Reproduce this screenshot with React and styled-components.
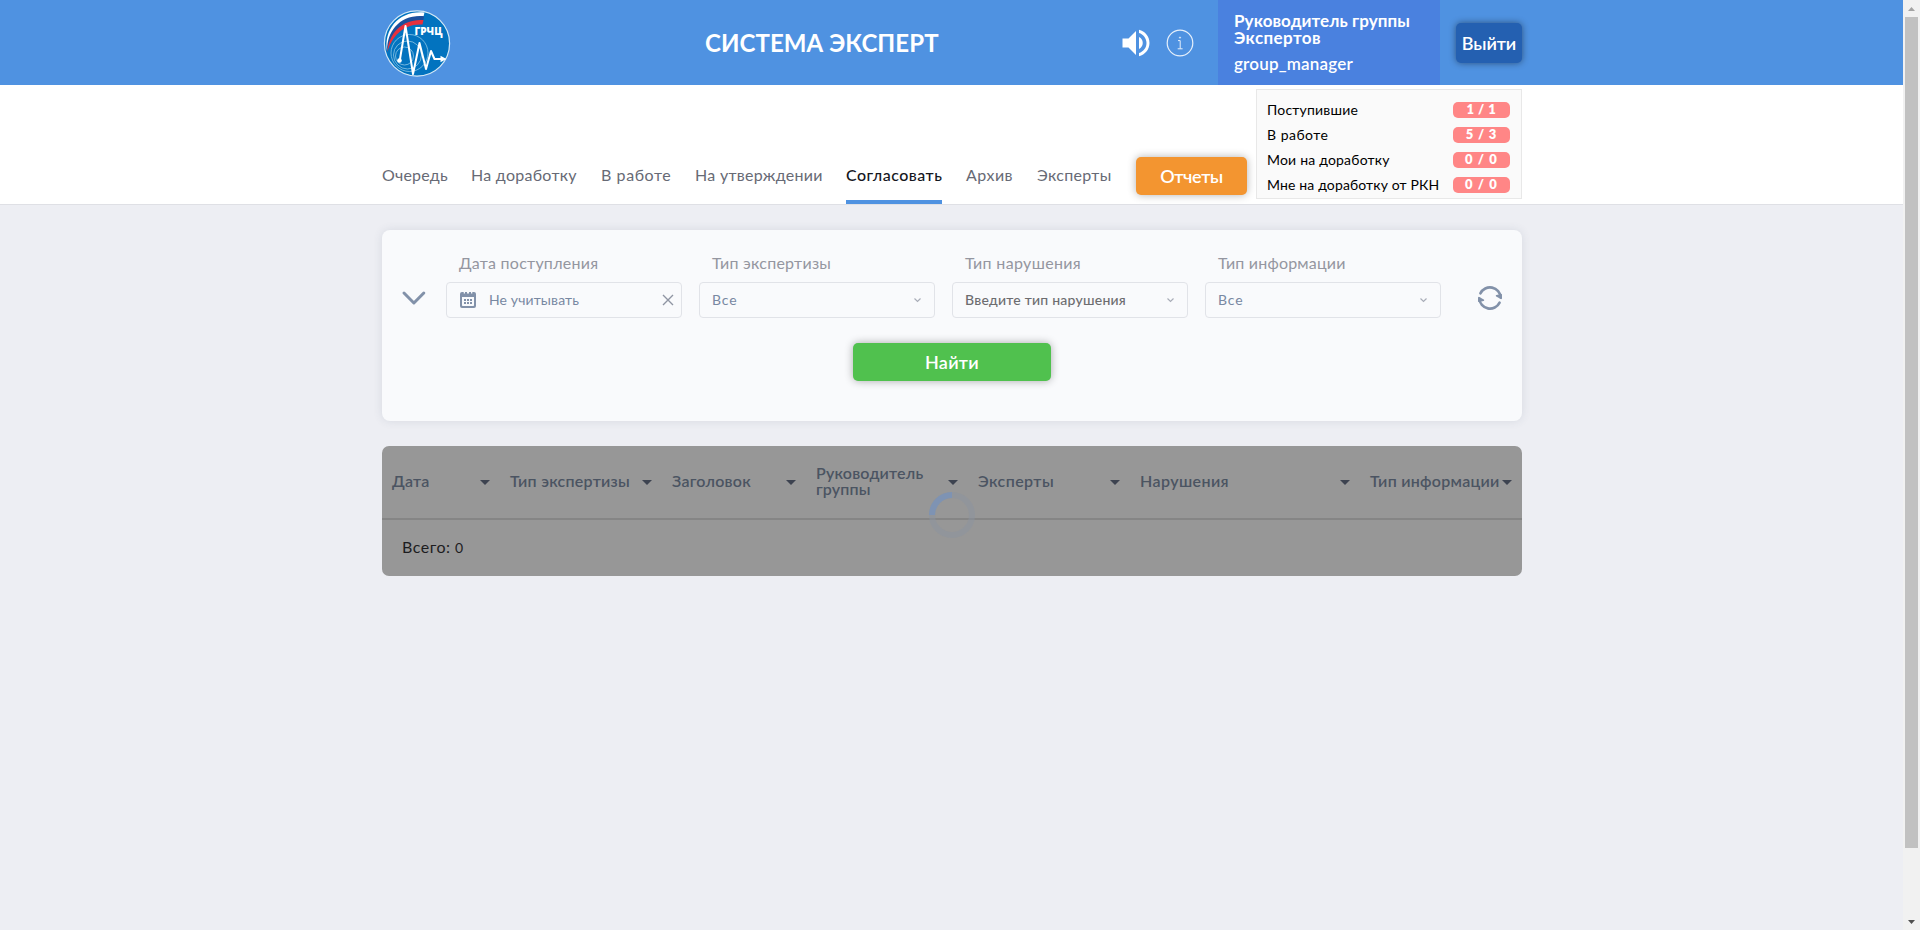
import React from 'react';
import styled, { createGlobalStyle } from 'styled-components';
import { MdVolumeUp } from 'react-icons/md';

const GlobalStyle = createGlobalStyle`
  *, *::before, *::after { box-sizing: border-box; }
  body { margin: 0; background: #edeef3; font-family: Lato, "Liberation Sans", sans-serif; overflow: hidden; }
  button { font-family: inherit; border: 0; padding: 0; }
`;

const Screen = styled.div`
  display: flex;
  height: 930px;
`;
const Page = styled.div`
  flex: 1;
  min-width: 0;
`;
const Container = styled.div`
  width: 1140px;
  margin: 0 auto 0 382px;
`;

const Label = styled.span`
  letter-spacing: ${(p) => p.$track || 0}px;
  white-space: nowrap;
`;

/* header */
const Header = styled.header`
  height: 85px;
  background: #4f92e1;
  color: #fff;
`;
const HeaderRow = styled(Container)`
  display: flex;
  align-items: center;
  height: 85px;
`;
const LogoBox = styled.div`
  width: 323px;
  height: 68px;
`;
const Title = styled.h1`
  margin: 0;
  width: 417px;
  font-size: 24px;
  line-height: 30px;
  font-weight: 700;
`;
const HeaderIcons = styled.div`
  display: flex;
  flex: none;
  align-items: center;
  gap: 12px;
  width: 98px;
  margin-left: -4px;
`;
const UserPanel = styled.div`
  display: flex;
  flex: none;
  flex-direction: column;
  justify-content: center;
  width: 222px;
  height: 85px;
  margin-left: 2px;
  padding: 0 16px;
  background: #4a81df;
  font-size: 17px;
`;
const UserRole = styled.div`
  display: flex;
  flex-direction: column;
  line-height: 17px;
  font-weight: 700;
`;
const UserLogin = styled.div`
  margin-top: 8px;
  line-height: 20px;
  font-weight: 600;
`;
const ExitButton = styled.button`
  flex: none;
  width: 66px;
  height: 40px;
  margin: 1px 0 0 16px;
  padding-bottom: 1px;
  border-radius: 5px;
  background: #2460b1;
  color: #fff;
  font-size: 18px;
  font-weight: 600;
  box-shadow: 0 0 7px rgba(0, 0, 0, 0.45);
`;

/* navigation */
const NavBar = styled.div`
  height: 120px;
  background: #fff;
  border-bottom: 1px solid #dfe0e5;
`;
const NavRow = styled(Container)`
  display: flex;
  align-items: flex-end;
  height: 119px;
`;
const Tabs = styled.nav`
  display: flex;
  width: 754px;
`;
const Tab = styled.a`
  width: ${(p) => p.$width}px;
  height: 42px;
  padding-top: 2px;
  margin-right: ${(p) => p.$gap || 24}px;
  border-bottom: 4px solid ${(p) => (p.$active ? '#4f92e1' : 'transparent')};
  color: ${(p) => (p.$active ? '#15171e' : '#676a75')};
  font-size: 16px;
  line-height: 22px;
  font-weight: ${(p) => (p.$active ? 500 : 400)};
`;
const ReportsButton = styled.button`
  width: 111px;
  height: 38px;
  margin: 0 9px 9px 0;
  border-radius: 5px;
  background: #f39530;
  color: #fff;
  font-size: 18px;
  font-weight: 600;
  box-shadow: 0 0 8px rgba(0, 0, 0, 0.3);
`;
const Stats = styled.div`
  width: 266px;
  height: 110px;
  margin-bottom: 5px;
  padding: 7px 11px 0 10px;
  border: 1px solid #e8e8e8;
  background: #fafafa;
`;
const StatRow = styled.div`
  display: flex;
  align-items: center;
  justify-content: space-between;
  height: 25px;
  color: #000;
  font-size: 14px;
  font-weight: 400;
`;
const Badge = styled.span`
  width: 57px;
  height: 16px;
  border-radius: 5px;
  background: #ff8686;
  color: #fff;
  font-size: 13px;
  line-height: 15px;
  font-weight: 800;
  text-align: center;
`;

/* filters */
const FilterCard = styled(Container)`
  height: 191px;
  margin-top: 25px;
  padding-top: 20px;
  border-radius: 8px;
  background: #f9fafc;
  box-shadow: 0 0 10px rgba(60, 70, 100, 0.12);
`;
const FilterRow = styled.div`
  display: flex;
  align-items: flex-end;
  height: 68px;
`;
const ExpandToggle = styled.div`
  display: flex;
  align-items: center;
  width: 64px;
  height: 40px;
  padding: 0 0 1px 19px;
`;
const Field = styled.div`
  width: 236px;
  margin-right: 17px;
`;
const FieldLabel = styled.div`
  height: 32px;
  padding-left: 13px;
  color: #9496a0;
  font-size: 16px;
  line-height: 26px;
  font-weight: 400;
`;
const Control = styled.div`
  display: flex;
  align-items: center;
  height: 36px;
  padding: 0 ${(p) => p.$end || 12}px 0 ${(p) => p.$start || 12}px;
  border: 1px solid #e1e3e8;
  border-radius: 4px;
  color: ${(p) => (p.$dark ? '#6d6d70' : '#7888a2')};
  font-size: 14px;
  font-weight: ${(p) => (p.$dark ? 500 : 400)};
`;
const ControlText = styled.span`
  flex: 1;
  padding-bottom: 2px;
  margin-left: ${(p) => p.$indent || 0}px;
`;
const Refresh = styled.div`
  display: flex;
  align-items: center;
  height: 40px;
  margin-left: 19px;
`;
const FindButton = styled.button`
  display: block;
  width: 198px;
  height: 38px;
  margin: 25px auto 0;
  border-radius: 5px;
  background: #50c14e;
  color: #fff;
  font-size: 18px;
  font-weight: 600;
  box-shadow: 0 0 8px rgba(0, 0, 0, 0.32);
`;

/* table */
const TableCard = styled(Container)`
  position: relative;
  height: 130px;
  margin-top: 25px;
  border-radius: 7px;
  background: #979797;
`;
const HeadRow = styled.div`
  display: grid;
  grid-template-columns: 118px 162px 144px 162px 162px 230px 162px;
  height: 74px;
  border-bottom: 2px solid #858585;
`;
const HeadCell = styled.div`
  display: flex;
  align-items: center;
  justify-content: space-between;
  padding: 0 10px;
  color: #4b5462;
  font-size: 16px;
  line-height: 16px;
  font-weight: 600;
`;
const HeadText = styled.div`
  display: flex;
  flex-direction: column;
  padding-bottom: 2px;
`;
const SortArrow = styled.i`
  flex: none;
  margin: 0 0 0 -6px;
  border: 5px solid transparent;
  border-top-color: #3d4350;
  border-bottom: 0;
`;
const Total = styled.div`
  padding: 15px 20px;
  color: #1d1d1f;
  font-size: 16px;
  line-height: 24px;
  font-weight: 400;
`;
const SmallDigit = styled.span`
  font-size: 14px;
`;
const Spinner = styled.div`
  position: absolute;
  left: 547px;
  top: 46px;
  width: 46px;
  height: 46px;
  svg { display: block; }
`;

/* scrollbar */
const ScrollTrack = styled.div`
  display: flex;
  flex-direction: column;
  align-items: center;
  width: 17px;
  background: #f1f1f1;
`;
const ScrollThumb = styled.div`
  width: 13px;
  height: 831px;
  margin-bottom: auto;
  background: #c1c1c1;
`;
const ScrollEnd = styled.div`
  display: flex;
  align-items: center;
  justify-content: center;
  height: 17px;
`;

const Logo = () => (
  <svg width="69" height="68" viewBox="0 0 68 68">
    <circle cx="34.5" cy="34.5" r="32.6" fill="#0273bf" stroke="#d3e8f5" strokeWidth="1.2" />
    <g fill="none" stroke="#8fc6e4" strokeWidth="0.8">
      <circle cx="27" cy="44" r="18.5" />
      <circle cx="25" cy="46" r="14" />
      <circle cx="22" cy="47" r="9" />
    </g>
    <path d="M4.5 42C1 20 17 1 42 3.5L41 7.5C20 6 7 20 4.5 42Z" fill="#fff" />
    <path d="M4.8 42C4 22 18 5 41.6 7.2L40.8 11.5C21 11 8 24 4.8 42Z" fill="#1c4f9c" />
    <path d="M5 43C6 24 20 9.5 41 11L40 15.5C22 14 9 27 5 43Z" fill="#e8303c" />
    <path d="M17 53L23 17L30.5 65L37 34L43.5 60L48.5 42L52 50H59" fill="none" stroke="#fff" strokeWidth="2" strokeLinejoin="round" />
    <path d="M58 46.8L64 50L58 53.2Z" fill="#fff" />
    <circle cx="17" cy="51.5" r="2.3" fill="#fff" />
    <text x="32" y="26" fill="#fff" fontFamily="Open Sans, sans-serif" fontWeight="800" fontSize="11" textLength="28" lengthAdjust="spacingAndGlyphs">ГРЧЦ</text>
  </svg>
);

const InfoIcon = () => (
  <svg width="28" height="28" viewBox="0 0 28 28" fill="none" stroke="#fff">
    <circle cx="14" cy="14" r="12.8" strokeWidth="1.2" opacity="0.85" />
    <path d="M12 11.6H14.2V19.5M11.7 19.8H16.6" strokeWidth="1" opacity="0.85" />
    <circle cx="14" cy="8.6" r="0.6" strokeWidth="0.8" />
  </svg>
);

const BigChevron = () => (
  <svg width="25" height="16" viewBox="0 0 25 16" fill="none" stroke="#8291a9" strokeWidth="3" strokeLinecap="round" strokeLinejoin="round">
    <path d="M3 3L12.9 13L22.8 3" />
  </svg>
);

const SmallChevron = () => (
  <svg width="9" height="7" viewBox="0 0 9 7" fill="none" stroke="#a9adb8" strokeWidth="1.2">
    <path d="M1.5 1.5L4.5 4.5L7.5 1.5" />
  </svg>
);

const CloseIcon = () => (
  <svg width="12" height="12" viewBox="0 0 12 12" fill="none" stroke="#8f95a3" strokeWidth="1.4">
    <path d="M1 1L11 11M11 1L1 11" />
  </svg>
);

const CalendarIcon = () => (
  <svg width="16" height="16" viewBox="0 0 16 16">
    <path fill="#8291a9" fillRule="evenodd" d="M2 0H3.7V1.5H5V0H7V1.5H9V0H11V1.5H12.3V0H14Q16 0 16 2V14Q16 16 14 16H2Q0 16 0 14V2Q0 0 2 0ZM2 5V13.3Q2 14 2.7 14H13.3Q14 14 14 13.3V5Z" />
    <path fill="#8291a9" d="M4 7h2v2h-2zM7 7h2v2h-2zM10 7h2v2h-2zM4 10h2v2h-2zM7 10h2v2h-2zM10 10h2v2h-2z" />
  </svg>
);

const RefreshIcon = () => (
  <svg width="26" height="26" viewBox="0 0 26 26" fill="none" stroke="#8291a9" strokeWidth="2.6" strokeLinecap="round" strokeLinejoin="round">
    <path d="M3.4 8.4A10.7 10.7 0 0 1 23.7 12.5" />
    <path d="M22.6 17.6A10.7 10.7 0 0 1 2.3 13.5" />
    <path d="M19.6 10.9L24.1 13.4L24.2 9.8ZM6.4 15.1L1.9 12.6L1.8 16.2Z" fill="#8291a9" strokeWidth="1.6" />
  </svg>
);

const ScrollArrow = ({ up }) => (
  <svg width="7" height="4" viewBox="0 0 7 4">
    <path d={up ? 'M0 4L3.5 0L7 4Z' : 'M0 0L3.5 4L7 0Z'} fill={up ? '#a3a3a3' : '#505050'} />
  </svg>
);

const tabs = [
  { text: 'Очередь', width: 65, track: 0.2, gap: 24 },
  { text: 'На доработку', width: 105, track: 0.28, gap: 25 },
  { text: 'В работе', width: 70, track: 0.58, gap: 24 },
  { text: 'На утверждении', width: 127, track: 0.3, gap: 24 },
  { text: 'Согласовать', width: 96, track: 0.5, gap: 24, active: true },
  { text: 'Архив', width: 47, track: 0.5, gap: 24 },
  { text: 'Эксперты', width: 75, track: 0.3, gap: 20 },
];

const stats = [
  { text: 'Поступившие', track: 0.2, value: '1 / 1', valueTrack: 0.5 },
  { text: 'В работе', track: 0.5, value: '5 / 3', valueTrack: 0.8 },
  { text: 'Мои на доработку', track: 0.2, value: '0 / 0', valueTrack: 1.1 },
  { text: 'Мне на доработку от РКН', track: 0.14, value: '0 / 0', valueTrack: 1.1 },
];

const selects = [
  { label: 'Тип экспертизы', track: 0.26, value: 'Все', valueTrack: 0.9 },
  { label: 'Тип нарушения', track: 0.34, value: 'Введите тип нарушения', valueTrack: 0.23, dark: true },
  { label: 'Тип информации', track: 0.2, value: 'Все', valueTrack: 0.9 },
];

const columns = [
  { lines: ['Дата'], track: 0.19 },
  { lines: ['Тип экспертизы'], track: 0.25 },
  { lines: ['Заголовок'], track: 0.26 },
  { lines: ['Руководитель', 'группы'], track: 0.18 },
  { lines: ['Эксперты'], track: 0.41 },
  { lines: ['Нарушения'], track: 0.41 },
  { lines: ['Тип информации'], track: 0.26 },
];

export default function App() {
  return (
    <Screen>
      <GlobalStyle />
      <Page>
        <Header>
          <HeaderRow>
            <LogoBox><Logo /></LogoBox>
            <Title><Label $track={0.08}>СИСТЕМА ЭКСПЕРТ</Label></Title>
            <HeaderIcons>
              <MdVolumeUp size={36} />
              <InfoIcon />
            </HeaderIcons>
            <UserPanel>
              <UserRole>
                <Label $track={0.08}>Руководитель группы</Label>
                <Label $track={0.4}>Экспертов</Label>
              </UserRole>
              <UserLogin><Label $track={0.2}>group_manager</Label></UserLogin>
            </UserPanel>
            <ExitButton><Label $track={-0.1}>Выйти</Label></ExitButton>
          </HeaderRow>
        </Header>
        <NavBar>
          <NavRow>
            <Tabs>
              {tabs.map((t) => (
                <Tab key={t.text} $width={t.width} $gap={t.gap} $active={t.active}>
                  <Label $track={t.track}>{t.text}</Label>
                </Tab>
              ))}
            </Tabs>
            <ReportsButton><Label $track={-0.4}>Отчеты</Label></ReportsButton>
            <Stats>
              {stats.map((s) => (
                <StatRow key={s.text}>
                  <Label $track={s.track}>{s.text}</Label>
                  <Badge><Label $track={s.valueTrack}>{s.value}</Label></Badge>
                </StatRow>
              ))}
            </Stats>
          </NavRow>
        </NavBar>
        <FilterCard>
          <FilterRow>
            <ExpandToggle><BigChevron /></ExpandToggle>
            <Field>
              <FieldLabel><Label $track={0.25}>Дата поступления</Label></FieldLabel>
              <Control $start={13} $end={7}>
                <CalendarIcon />
                <ControlText $indent={13}><Label $track={0.12}>Не учитывать</Label></ControlText>
                <CloseIcon />
              </Control>
            </Field>
            {selects.map((s) => (
              <Field key={s.label}>
                <FieldLabel><Label $track={s.track}>{s.label}</Label></FieldLabel>
                <Control $dark={s.dark}>
                  <ControlText><Label $track={s.valueTrack}>{s.value}</Label></ControlText>
                  <SmallChevron />
                </Control>
              </Field>
            ))}
            <Refresh><RefreshIcon /></Refresh>
          </FilterRow>
          <FindButton><Label $track={0.27}>Найти</Label></FindButton>
        </FilterCard>
        <TableCard>
          <HeadRow>
            {columns.map((c) => (
              <HeadCell key={c.lines[0]}>
                <HeadText>
                  {c.lines.map((l) => <Label key={l} $track={c.track}>{l}</Label>)}
                </HeadText>
                <SortArrow />
              </HeadCell>
            ))}
          </HeadRow>
          <Total><Label $track={0.5}>Всего: <SmallDigit>0</SmallDigit></Label></Total>
          <Spinner>
            <svg width="46" height="46" viewBox="0 0 46 46" fill="none" strokeWidth="6">
              <circle cx="23" cy="23" r="20" stroke="#8b93a0" opacity="0.5" />
              <path d="M3 23A20 20 0 0 1 23 3" stroke="#7e93b3" />
            </svg>
          </Spinner>
        </TableCard>
      </Page>
      <ScrollTrack>
        <ScrollEnd><ScrollArrow up /></ScrollEnd>
        <ScrollThumb />
        <ScrollEnd><ScrollArrow /></ScrollEnd>
      </ScrollTrack>
    </Screen>
  );
}
